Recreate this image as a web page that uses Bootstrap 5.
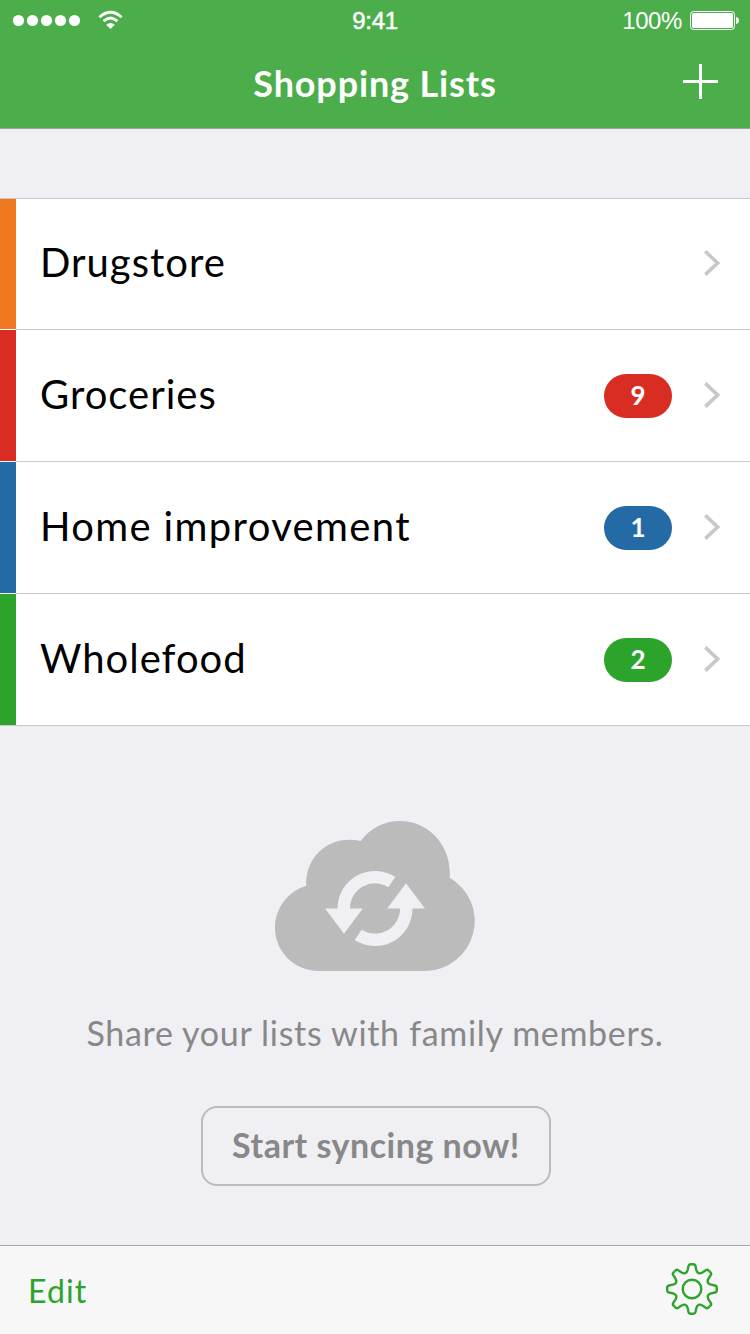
<!DOCTYPE html>
<html lang="en">
<head>
<meta charset="utf-8">
<meta name="viewport" content="width=device-width, initial-scale=1">
<title>Shopping Lists</title>
<link href="https://cdn.jsdelivr.net/npm/bootstrap@5.3.0/dist/css/bootstrap.min.css" rel="stylesheet">
<style>
body{font-family:Lato,"Open Sans",sans-serif;background:#efeff4;color:#000}
.app{height:1334px;overflow:hidden}
.topbar{height:129px;background:#4bae4b;border-bottom:1px solid #a0a3a1;color:#fff}
.status{height:40px;padding:0 11px 0 13px;font:24px/40px "Liberation Sans",sans-serif}
.status>*{flex:1 1 0}
.clock{-webkit-text-stroke:.5px #fff;letter-spacing:-.3px;padding:1px 2px 0 0}
.pct{letter-spacing:-.4px;padding-top:1px}
.titlebar{height:88px;padding:0 32px}
.titlebar>*{flex:1 1 0}
.titlebar .title{flex:0 0 auto;font-size:36px;font-weight:700;line-height:44px;letter-spacing:.85px;padding-bottom:2px}
.add{padding-bottom:5px}
.lists{margin-top:69px;border-top:1px solid #c8c7cc}
.lists .list-group-item,.lists .list-group-item:last-child{height:132px;padding:0 30px 0 0;border:0;border-bottom:1px solid #c8c7cc;color:#000;background:#fff}
.lists .list-group-item:first-child{height:131px}
.stripe{width:16px;background:var(--tint);margin-right:24px}
.stripe-gap{box-shadow:0 1px #fff}
.list-name{font-size:40px;line-height:48px;letter-spacing:1px;padding-bottom:4px}
.name-wide{letter-spacing:1.35px}
.chevron{margin-bottom:2px}
.count{width:68px;height:44px;background:var(--tint);font-size:26px;font-weight:700;line-height:43px;padding:0;margin-right:32px}
.orange{--tint:#f07820}.red{--tint:#d92d24}.blue{--tint:#246aa5}.green{--tint:#2ca42c}
.promo{padding-top:95px;color:#888}
.promo-text{font-size:34px;line-height:42px;letter-spacing:.68px;margin:41px 0 52px}
.sync-btn{width:350px;height:80px;border:2px solid #bbb;border-radius:16px;color:#888;font-size:34px;font-weight:700;line-height:42px;letter-spacing:.5px;padding:0 0 2px;margin-left:2px}
.toolbar{height:89px;background:#f7f7f7;border-top:1px solid #a4a4a9;padding:0 32px 0 28px}
.edit{color:#2ca42c;font-size:32px;line-height:40px;letter-spacing:1.1px;padding-top:2px}
.gear{margin-bottom:2px}
</style>
</head>
<body>
<div class="app d-flex flex-column">
  <header class="topbar flex-shrink-0">
    <div class="status d-flex align-items-center">
      <div class="d-flex align-items-center">
        <svg width="110" height="24" viewBox="0 0 110 24" fill="#fff">
          <circle cx="5.5" cy="12.5" r="5.6"/><circle cx="19.5" cy="12.5" r="5.6"/><circle cx="33.5" cy="12.5" r="5.6"/><circle cx="47.5" cy="12.5" r="5.6"/><circle cx="61.5" cy="12.5" r="5.6"/>
          <path d="M97.5 21 L93.2 16.8 Q97.5 13.2 101.8 16.8Z"/>
          <path d="M86.4 9.2 Q97.5 -.9 108.6 9.2 M90.6 13.2 Q97.5 7 104.4 13.2" fill="none" stroke="#fff" stroke-width="2.9"/>
        </svg>
      </div>
      <div class="clock text-center">9:41</div>
      <div class="d-flex align-items-center justify-content-end">
        <span class="pct">100%</span>
        <svg class="ms-2" width="49" height="19" viewBox="0 0 49 19" fill="#fff">
          <rect x=".5" y=".5" width="44" height="18" rx="3" fill="none" stroke="#fff"/>
          <rect x="2" y="2" width="41" height="15" rx="1.5"/>
          <path d="M46 6 Q49 6.5 49 9.5 T46 13Z"/>
        </svg>
      </div>
    </div>
    <div class="titlebar d-flex align-items-center">
      <span></span>
      <h1 class="title m-0">Shopping Lists</h1>
      <div class="add d-flex justify-content-end">
        <svg width="35" height="35" viewBox="0 0 35 35"><path d="M17.5 0V35M0 17.5H35" stroke="#fff" stroke-width="3"/></svg>
      </div>
    </div>
  </header>

  <div class="lists list-group list-group-flush rounded-0 flex-shrink-0">
    <a class="list-group-item d-flex align-items-center orange"><span class="stripe stripe-gap align-self-stretch"></span><span class="list-name me-auto">Drugstore</span>
      <svg class="chevron" width="16" height="26" viewBox="0 0 16 26"><path d="M1.3 1.4 13.6 13 1.3 24.6" fill="none" stroke="#c7c7cc" stroke-width="3.6"/></svg></a>
    <a class="list-group-item d-flex align-items-center red"><span class="stripe stripe-gap align-self-stretch"></span><span class="list-name me-auto">Groceries</span><span class="count badge rounded-pill">9</span>
      <svg class="chevron" width="16" height="26" viewBox="0 0 16 26"><path d="M1.3 1.4 13.6 13 1.3 24.6" fill="none" stroke="#c7c7cc" stroke-width="3.6"/></svg></a>
    <a class="list-group-item d-flex align-items-center blue"><span class="stripe stripe-gap align-self-stretch"></span><span class="list-name name-wide me-auto">Home improvement</span><span class="count badge rounded-pill">1</span>
      <svg class="chevron" width="16" height="26" viewBox="0 0 16 26"><path d="M1.3 1.4 13.6 13 1.3 24.6" fill="none" stroke="#c7c7cc" stroke-width="3.6"/></svg></a>
    <a class="list-group-item d-flex align-items-center green"><span class="stripe align-self-stretch"></span><span class="list-name me-auto">Wholefood</span><span class="count badge rounded-pill">2</span>
      <svg class="chevron" width="16" height="26" viewBox="0 0 16 26"><path d="M1.3 1.4 13.6 13 1.3 24.6" fill="none" stroke="#c7c7cc" stroke-width="3.6"/></svg></a>
  </div>

  <main class="promo flex-grow-1 d-flex flex-column align-items-center">
    <svg class="flex-shrink-0" width="200" height="150" viewBox="0 0 200 150">
      <path fill="#bbb" d="M44 150C19 150 0 130 0 107C0 87 13 70 31.3 64.7C30 38 50 18.7 74.5 18.7Q80 18.7 85.7 20C95 7.500 109 0 125 0C154 0 177 25 174.7 56.7A50 50 0 0 1 151 150Z"/>
      <g fill="#efeff4">
        <path id="arrow" d="M62.5 87.5A37.5 37.5 0 0 1 120.3 55.9L113.3 66.2A25 25 0 0 0 75 87.5H87.8L69 112.7 50 87.5Z"/>
        <use href="#arrow" transform="rotate(180 100 87.5)"/>
      </g>
    </svg>
    <p class="promo-text">Share your lists with family members.</p>
    <button class="btn sync-btn">Start syncing now!</button>
  </main>

  <footer class="toolbar flex-shrink-0 d-flex align-items-center justify-content-between">
    <a class="edit text-decoration-none">Edit</a>
    <svg class="gear" width="52" height="52" viewBox="-26 -26 52 52" fill="none" stroke="#2ca42c" stroke-width="2.4">
      <defs><path id="tooth" d="M0 -24.800H1.3Q3.1 -24.800 3.5 -23L4.3 -19Q5.8 -14 10.4 -16.5L13.8 -18.75Q15.4 -19.750 16.600 -18.450L17.54 -17.54"/></defs>
      <use href="#tooth"/><use href="#tooth" transform="rotate(45)"/><use href="#tooth" transform="rotate(90)"/><use href="#tooth" transform="rotate(135)"/><use href="#tooth" transform="rotate(180)"/><use href="#tooth" transform="rotate(225)"/><use href="#tooth" transform="rotate(270)"/><use href="#tooth" transform="rotate(315)"/>
      <circle r="9.3"/>
    </svg>
  </footer>
</div>
<script src="https://cdn.jsdelivr.net/npm/bootstrap@5.3.0/dist/js/bootstrap.bundle.min.js"></script>
</body>
</html>
